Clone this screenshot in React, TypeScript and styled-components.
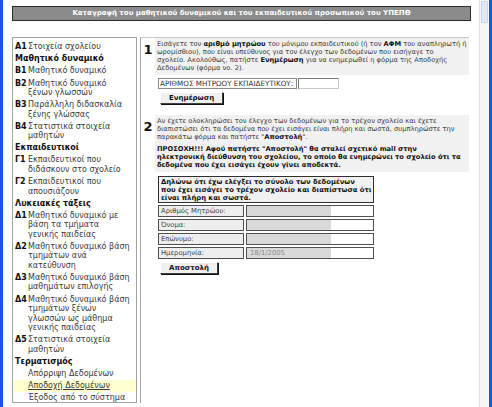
import { FC } from "react";
import styled, { createGlobalStyle } from "styled-components";

const GlobalStyle = createGlobalStyle`
  html, body {
    margin: 0;
    padding: 0;
    background: #ffffff;
  }
  body {
    font-family: "DejaVu Sans", Verdana, sans-serif;
    color: #333333;
  }
`;

interface MenuEntry {
  code?: string;
  text: string;
  heading?: boolean;
  active?: boolean;
}

const menu: MenuEntry[] = [
  { code: "A1", text: "Στοιχεία σχολείου" },
  { heading: true, text: "Μαθητικό δυναμικό" },
  { code: "B1", text: "Μαθητικό δυναμικό" },
  { code: "B2", text: "Μαθητικό δυναμικό ξένων γλωσσών" },
  { code: "B3", text: "Παράλληλη διδασκαλία ξένης γλώσσας" },
  { code: "B4", text: "Στατιστικά στοιχεία μαθητών" },
  { heading: true, text: "Εκπαιδευτικοί" },
  { code: "Γ1", text: "Εκπαιδευτικοί που διδάσκουν στο σχολείο" },
  { code: "Γ2", text: "Εκπαιδευτικοί που απουσιάζουν" },
  { heading: true, text: "Λυκειακές τάξεις" },
  { code: "Δ1", text: "Μαθητικό δυναμικό με βάση τα τμήματα γενικής παιδείας" },
  { code: "Δ2", text: "Μαθητικό δυναμικό βάση τμημάτων ανά κατεύθυνση" },
  { code: "Δ3", text: "Μαθητικό δυναμικό βάση μαθημάτων επιλογής" },
  { code: "Δ4", text: "Μαθητικό δυναμικό βάση τμημάτων ξένων γλωσσών ως μάθημα γενικής παιδείας" },
  { code: "Δ5", text: "Στατιστικά στοιχεία μαθητών" },
  { heading: true, text: "Τερματισμός" },
  { code: "", text: "Απόρριψη Δεδομένων" },
  { code: "", text: "Αποδοχή Δεδομένων", active: true },
  { code: "", text: "Έξοδος από το σύστημα" },
];

const teacherRows = [
  { label: "Αριθμός Μητρώου:", value: "" },
  { label: "Όνομα:", value: "" },
  { label: "Επώνυμο:", value: "" },
  { label: "Ημερομηνία:", value: "18/1/2005" },
];

const App: FC = () => {
  return (
    <>
      <GlobalStyle />
      <Window>
        <Page>
          <TitleBar>
            Καταγραφή του μαθητικού δυναμικού και του εκπαιδευτικού προσωπικού
            του ΥΠΕΠΘ
          </TitleBar>
          <Columns>
            <Sidebar>
              {menu.map((m, i) =>
                m.heading ? (
                  <MenuHeading key={i}>{m.text}</MenuHeading>
                ) : (
                  <MenuItem key={i} active={m.active}>
                    <MenuCode>{m.code}</MenuCode>
                    <MenuText active={m.active}>{m.text}</MenuText>
                  </MenuItem>
                )
              )}
            </Sidebar>
            <Main>
              <Step>
                <StepNumber>1</StepNumber>
                <StepNote>
                  Εισάγετε τον <b>αριθμό μητρώου</b> του μόνιμου εκπαιδευτικού
                  (ή τον <b>ΑΦΜ</b> του αναπληρωτή ή
                  <br />
                  ωρομίσθιου), που είναι υπεύθυνος για τον έλεγχο των δεδομένων
                  που εισήγαγε το
                  <br />
                  σχολείο. Ακολούθως, πατήστε <b>Ενημέρωση</b> για να
                  ενημερωθεί η φόρμα της Αποδοχής
                  <br />
                  Δεδομένων (φόρμα νο. 2).
                </StepNote>
              </Step>
              <StepBody>
                <FieldRow>
                  <FieldLabel>ΑΡΙΘΜΟΣ ΜΗΤΡΩΟΥ ΕΚΠΑΙΔΕΥΤΙΚΟΥ:</FieldLabel>
                  <TextInput />
                </FieldRow>
                <Button>Ενημέρωση</Button>
              </StepBody>

              <Step spaced>
                <StepNumber>2</StepNumber>
                <StepNote>
                  <p>
                    Αν έχετε ολοκληρώσει τον έλεγχο των δεδομένων για το τρέχον
                    σχολείο και έχετε
                    <br />
                    διαπιστώσει ότι τα δεδομένα που έχει εισάγει είναι πλήρη και
                    σωστά, συμπληρώστε την
                    <br />
                    παρακάτω φόρμα και πατήστε "<b>Αποστολή</b>".
                  </p>
                  <Warning>
                    ΠΡΟΣΟΧΗ!!! Αφού πατήστε "Αποστολή" θα σταλεί σχετικό mail
                    στην
                    <br />
                    ηλεκτρονική διεύθυνση του σχολείου, το οποίο θα ενημερώνει
                    το σχολείο ότι τα
                    <br />
                    δεδομένα που έχει εισάγει έχουν γίνει αποδεκτά.
                  </Warning>
                </StepNote>
              </Step>
              <StepBody>
                <Declaration>
                  <DeclarationHead>
                    Δηλώνω ότι έχω ελέγξει το σύνολο των δεδομένων
                    <br />
                    που έχει εισάγει το τρέχον σχολείο και διαπίστωσα ότι
                    <br />
                    είναι πλήρη και σωστά.
                  </DeclarationHead>
                  {teacherRows.map((r) => (
                    <DeclRow key={r.label}>
                      <DeclLabel>{r.label}</DeclLabel>
                      <DeclValue>
                        <DisabledField>{r.value}</DisabledField>
                      </DeclValue>
                    </DeclRow>
                  ))}
                </Declaration>
                <Button>Αποστολή</Button>
              </StepBody>
            </Main>
          </Columns>
        </Page>
        <Scrollbar>
          <ScrollArrow />
        </Scrollbar>
      </Window>
    </>
  );
};

export default App;

const Window = styled.div`
  display: flex;
  width: 492px;
  height: 407px;
  overflow: hidden;
  border-left: 3px solid #1856e0;
  border-right: 3px solid #1856e0;
  box-sizing: border-box;
  background: #ffffff;
`;

const Page = styled.div`
  flex: 1;
  padding: 6px 0 0 9px;
  min-width: 0;
`;

const TitleBar = styled.div`
  width: 459px;
  height: 15px;
  box-sizing: border-box;
  background: #8b8b8b;
  border: 1px solid #2c2c2c;
  color: #ffffff;
  font-size: 7px;
  font-weight: bold;
  line-height: 13px;
  text-align: center;
  white-space: nowrap;
`;

const Columns = styled.div`
  display: flex;
  align-items: flex-start;
  margin-top: 16px;
  gap: 3px;
`;

const Sidebar = styled.div`
  width: 125px;
  height: 366px;
  box-sizing: border-box;
  border: 1px solid #a3a3a3;
  padding: 3px 2px 0 1px;
  font-size: 8px;
  line-height: 9.5px;
`;

const MenuHeading = styled.div`
  padding: 1.3px 0 1.3px 1px;
  font-weight: bold;
  color: #111111;
`;

const MenuItem = styled.div<{ active?: boolean }>`
  display: flex;
  padding: 1.3px 0 1.3px 1px;
  margin-right: -2px;
  background: ${(p) => (p.active ? "#ffffd0" : "transparent")};
`;

const MenuCode = styled.span`
  flex: 0 0 13px;
  font-weight: bold;
  color: #111111;
  white-space: nowrap;
`;

const MenuText = styled.span<{ active?: boolean }>`
  flex: 1;
  padding-right: 4px;
  color: #3a3a3a;
  text-decoration: ${(p) => (p.active ? "underline" : "none")};
`;

const Main = styled.div`
  width: 329px;
  height: 366px;
  box-sizing: border-box;
  border-left: 1px solid #a3a3a3;
  border-top: 1px solid #c8c8c8;
  font-size: 6.8px;
  line-height: 8px;
`;

const Step = styled.div<{ spaced?: boolean }>`
  display: flex;
  align-items: flex-start;
  margin-top: ${(p) => (p.spaced ? "11px" : "0")};
`;

const StepNumber = styled.div`
  flex: 0 0 14px;
  padding-top: 4px;
  font-size: 13px;
  line-height: 16px;
  font-weight: bold;
  color: #111111;
  text-align: center;
`;

const StepNote = styled.div`
  flex: 1;
  min-width: 0;
  background: #f1f1f1;
  padding: 2px 0 3px 2px;
  font-size: 6.7px;
  color: #3c3c3c;
  white-space: nowrap;
  overflow: hidden;

  p {
    margin: 0;
  }
  b {
    color: #111111;
  }
`;

const Warning = styled.p`
  && {
    margin-top: 4px;
  }
  font-weight: bold;
  color: #111111;
`;

const StepBody = styled.div`
  padding: 3px 0 0 17px;
`;

const FieldRow = styled.div`
  display: flex;
  height: 11px;
`;

const FieldLabel = styled.div`
  width: 139px;
  box-sizing: border-box;
  border: 1px solid #8a8a8a;
  padding-left: 1px;
  font-size: 7.2px;
  line-height: 9px;
  color: #333333;
  white-space: nowrap;
  overflow: hidden;
`;

const TextInput = styled.div`
  width: 41px;
  margin-left: 1px;
  box-sizing: border-box;
  border: 1px solid #7a7a7a;
  border-right-color: #c8c8c8;
  border-bottom-color: #c8c8c8;
  background: #ffffff;
`;

const Button = styled.div`
  display: inline-block;
  margin: 3px 0 0 2px;
  padding: 0 8px;
  height: 12px;
  box-sizing: border-box;
  background: #f0f0f0;
  border: 1px solid #ffffff;
  border-right-color: #404040;
  border-bottom-color: #404040;
  box-shadow: 1px 1px 0 #101010;
  font-weight: bold;
  font-size: 7px;
  line-height: 10px;
  color: #111111;
`;

const Declaration = styled.div`
  width: 216px;
  display: grid;
  grid-template-columns: 86px 1fr;
  gap: 2px;
  margin-top: 1px;
`;

const DeclarationHead = styled.div`
  grid-column: 1 / span 2;
  height: 27px;
  box-sizing: border-box;
  border: 1px solid #303030;
  background: #f1f1f1;
  padding: 1px 1px 1px 2px;
  font-size: 6.8px;
  font-weight: bold;
  color: #111111;
  white-space: nowrap;
  overflow: hidden;
`;

const DeclRow = styled.div`
  display: contents;
`;

const DeclLabel = styled.div`
  height: 12px;
  box-sizing: border-box;
  border: 1px solid #505050;
  background: #eeeeee;
  padding-left: 2px;
  line-height: 10px;
  color: #444444;
`;

const DeclValue = styled.div`
  height: 12px;
  box-sizing: border-box;
  border: 1px solid #505050;
  background: #ffffff;
`;

const DisabledField = styled.div`
  width: 81px;
  height: 100%;
  background: #d9d9d9;
  padding-left: 3px;
  line-height: 10px;
  color: #8a8a8a;
`;

const Scrollbar = styled.div`
  flex: 0 0 9px;
  background: #f5f5f1;
  border-left: 1px solid #e2e2e2;
`;

const ScrollArrow = styled.div`
  height: 20px;
  margin: 1px;
  border-radius: 1px;
  background: #e3e8f5;
  border: 1px solid #c9d3ec;
`;
